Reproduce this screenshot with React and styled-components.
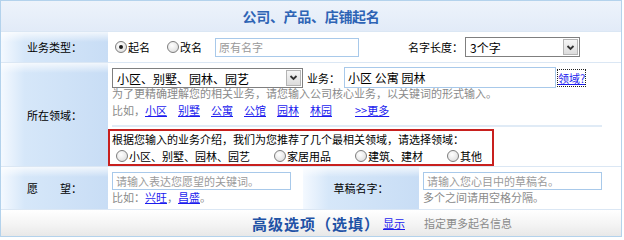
import React from 'react';
import styled, { createGlobalStyle } from 'styled-components';

const Global = createGlobalStyle`
  html, body { margin: 0; padding: 0; background: #fff; }
  body {
    font-family: "Noto Sans CJK SC", "Noto Sans", sans-serif;
    font-size: 11px;
    color: #000;
  }
  * { box-sizing: border-box; }
`;

const Panel = styled.div`
  width: 622px;
  border: 1px solid #b3d2ec;
  background: #dbe7f4;
  display: flex;
  flex-direction: column;
  gap: 1px;
`;

const Header = styled.div`
  height: 30px;
  display: flex;
  align-items: center;
  justify-content: center;
  background: linear-gradient(180deg, #edf3fb 0%, #e2ebf8 100%);
  color: #2e64b5;
  font-size: 14px;
  font-weight: bold;
  letter-spacing: -0.3px;
`;

const Row = styled.div`
  display: flex;
  height: ${p => p.$h}px;
  background: #fff;
`;

const LabelCell = styled.div`
  width: ${p => p.$w}px;
  flex-shrink: 0;
  display: flex;
  align-items: center;
  justify-content: center;
  white-space: pre;
  background:
    linear-gradient(180deg, rgba(255,255,255,0.75) 0, rgba(255,255,255,0) 10px),
    linear-gradient(90deg, #f4f9ff 0%, #d6e7f9 22%, #c8ddf5 100%);
`;

const InlineCell = styled.div`
  flex: ${p => (p.$w ? '0 0 auto' : '1')};
  width: ${p => (p.$w ? `${p.$w}px` : 'auto')};
  display: flex;
  align-items: center;
  padding-left: ${p => p.$pl || 0}px;
  padding-right: ${p => p.$pr || 0}px;
  justify-content: ${p => (p.$end ? 'flex-end' : 'flex-start')};
`;

const StackCell = styled.div`
  flex: ${p => (p.$w ? '0 0 auto' : '1')};
  width: ${p => (p.$w ? `${p.$w}px` : 'auto')};
  display: flex;
  flex-direction: column;
  padding: ${p => p.$pt || 0}px 0 0 ${p => p.$pl || 0}px;
`;

const RadioOption = styled.label`
  display: inline-flex;
  align-items: center;
  gap: 1px;
  margin-right: ${p => p.$mr || 0}px;
  white-space: nowrap;
`;

const RadioMark = styled.span`
  width: 12px;
  height: 12px;
  border-radius: 50%;
  border: 1px solid #7d7d7d;
  background: radial-gradient(circle at 40% 35%, #ffffff 0%, #e6e6e6 65%, #cdcdcd 100%);
  display: inline-flex;
  align-items: center;
  justify-content: center;
  &::after {
    content: '';
    width: 4px;
    height: 4px;
    border-radius: 50%;
    background: #1c1c1c;
    display: ${p => (p.$checked ? 'block' : 'none')};
  }
`;

const TextInput = styled.input`
  width: ${p => p.$w}px;
  height: ${p => p.$h}px;
  border: 1px solid #a8c9ea;
  padding: 0 3px;
  font: inherit;
  font-size: ${p => (p.$big ? 12 : 11)}px;
  color: #000;
  background: #fff;
  outline: none;
  &::placeholder { color: #9a9a9a; }
`;

const SelectBox = styled.span`
  display: inline-flex;
  width: ${p => p.$w}px;
  height: 20px;
  border: 1px solid #7f7f7f;
  background: #fff;
  padding: 1px;
`;

const NativeSelect = styled.select`
  flex: 1;
  min-width: 0;
  appearance: none;
  -webkit-appearance: none;
  border: none;
  background: transparent;
  font: inherit;
  font-size: 12px;
  padding: 0 3px;
  color: #000;
  outline: none;
`;

const ArrowButton = styled.span`
  width: 15px;
  flex-shrink: 0;
  border: 1px solid #b4b4b4;
  background: linear-gradient(180deg, #f6f6f6 0%, #dcdcdc 100%);
  display: flex;
  align-items: center;
  justify-content: center;
`;

const Field = styled.span`
  margin: 0 ${p => p.$mr || 0}px 0 ${p => p.$ml || 0}px;
  white-space: nowrap;
`;

const Group = styled.div`
  margin-left: auto;
  padding-right: 41px;
  display: flex;
  align-items: center;
  gap: 2px;
`;

const Line = styled.div`
  display: flex;
  align-items: center;
  height: ${p => p.$h}px;
  margin-top: ${p => p.$mt || 0}px;
  white-space: nowrap;
`;

const Hint = styled.div`
  color: #8a8a8a;
  line-height: ${p => p.$lh || 14}px;
  margin-top: ${p => p.$mt || 0}px;
  white-space: nowrap;
`;

const Link = styled.a`
  color: #1c1cee;
  text-decoration: underline;
  margin-right: ${p => p.$mr || 0}px;
  margin-left: ${p => p.$ml || 0}px;
  cursor: pointer;
  outline: ${p => (p.$focus ? '1px dotted #222' : 'none')};
  outline-offset: 0;
`;

const Divider = styled.div`
  width: 490px;
  height: 2px;
  margin: 5px 0 0 4px;
  background: #e0ebf6;
`;

const RedBox = styled.div`
  width: 386px;
  height: 37px;
  margin-top: 2px;
  border: 2px solid #c8201e;
  display: flex;
  flex-direction: column;
`;

const Options = styled.div`
  display: flex;
  align-items: center;
  height: 17px;
  padding-left: 6px;
  gap: 24px;
`;

const FooterTitle = styled.span`
  color: #1f52a6;
  font-size: 15px;
  font-weight: bold;
  letter-spacing: 1px;
  margin-right: 3px;
`;

const Chevron = () => (
  <svg width="9" height="7" viewBox="0 0 9 7">
    <path d="M1.5 2 L4.5 5 L7.5 2" fill="none" stroke="#333" strokeWidth="1.8" />
  </svg>
);

const Select = ({ w, value, options }) => (
  <SelectBox $w={w}>
    <NativeSelect defaultValue={value}>
      {options.map(o => <option key={o}>{o}</option>)}
    </NativeSelect>
    <ArrowButton><Chevron /></ArrowButton>
  </SelectBox>
);

const Radio = ({ checked, children, mr }) => (
  <RadioOption $mr={mr}>
    <RadioMark $checked={checked} />
    {children}
  </RadioOption>
);

const examples = ['小区', '别墅', '公寓', '公馆', '园林', '林园'];
const fields = ['小区、别墅、园林、园艺', '家居用品', '建筑、建材', '其他'];

export default function App() {
  return (
    <>
      <Global />
      <Panel>
        <Header>公司、产品、店铺起名</Header>

        <Row $h={30}>
          <LabelCell $w={107}>业务类型：</LabelCell>
          <InlineCell $pl={7}>
            <Radio checked mr={17}>起名</Radio>
            <Radio mr={13}>改名</Radio>
            <TextInput $w={144} $h={19} placeholder="原有名字" />
            <Group>
              <span>名字长度：</span>
              <Select w={115} value="3个字" options={['2个字', '3个字', '4个字']} />
            </Group>
          </InlineCell>
        </Row>

        <Row $h={103}>
          <LabelCell $w={107}>所在领域：</LabelCell>
          <StackCell>
            <StackCell $pt={4} $pl={4}>
              <Line $h={21}>
                <Select w={191} value="小区、别墅、园林、园艺" options={fields} />
                <Field $ml={4} $mr={4}>业务：</Field>
                <TextInput $w={212} $h={21} $big defaultValue="小区 公寓 园林" />
                <Link $ml={2} $focus>领域?</Link>
              </Line>
              <Hint $lh={13} $mt={-1}>为了更精确理解您的相关业务，请您输入公司核心业务，以关键词的形式输入。</Hint>
              <Line $h={16} $mt={2}>
                <Hint as="span">比如，</Hint>
                {examples.map(e => <Link key={e} $mr={11}>{e}</Link>)}
                <Link $ml={12}>&gt;&gt;更多</Link>
              </Line>
            </StackCell>
            <Divider />
            <RedBox>
              <Line $h={16} style={{ paddingLeft: 2 }}>根据您输入的业务介绍，我们为您推荐了几个最相关领域，请选择领域：</Line>
              <Options>
                {fields.map(f => <Radio key={f}>{f}</Radio>)}
              </Options>
            </RedBox>
          </StackCell>
        </Row>

        <Row $h={42}>
          <LabelCell $w={107}>{'愿　　望：'}</LabelCell>
          <StackCell $w={195} $pt={5} $pl={4}>
            <TextInput $w={179} $h={18} placeholder="请输入表达您愿望的关键词。" />
            <Hint>比如：<Link>兴旺</Link>，<Link>昌盛</Link>。</Hint>
          </StackCell>
          <LabelCell $w={116}>草稿名字：</LabelCell>
          <StackCell $pt={5} $pl={4}>
            <TextInput $w={179} $h={18} placeholder="请输入您心目中的草稿名。" />
            <Hint>多个之间请用空格分隔。</Hint>
          </StackCell>
        </Row>

        <Row $h={26} style={{ background: 'linear-gradient(180deg, #ffffff 0%, #f3f3f3 60%, #e8e8e8 100%)' }}>
          <InlineCell $w={418} $end $pr={14}>
            <FooterTitle>高级选项（选填）</FooterTitle>
            <Link>显示</Link>
          </InlineCell>
          <InlineCell $pl={5}>
            <Hint as="span">指定更多起名信息</Hint>
          </InlineCell>
        </Row>
      </Panel>
    </>
  );
}
